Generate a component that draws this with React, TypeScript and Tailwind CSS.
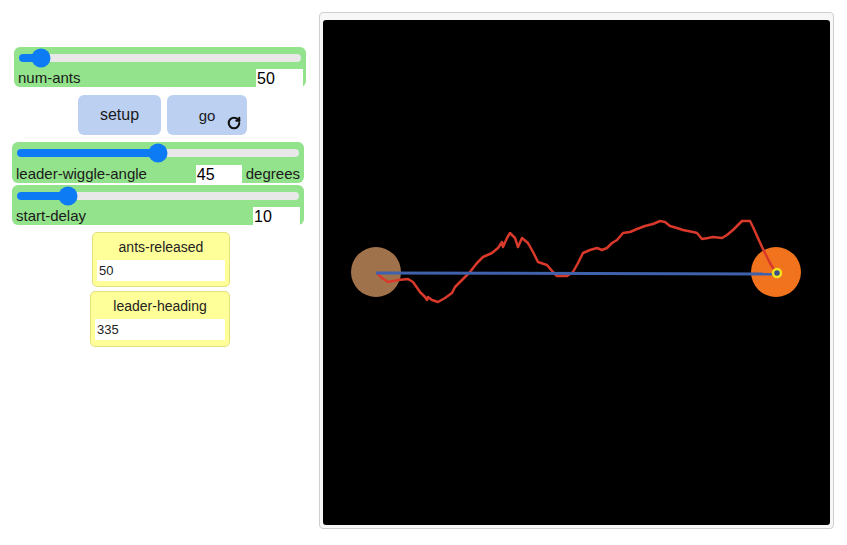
import { RotateCw } from 'lucide-react'

const font = { fontFamily: '"Liberation Sans", Arial, sans-serif' }

type SliderProps = {
  className: string
  thumb: number
  label: string
  value: string
  valueClass: string
  units?: string
}

function Slider({ className, thumb, label, value, valueClass, units }: SliderProps) {
  return (
    <div className={`flex flex-col rounded-[6px] bg-[#93e28c] ${className}`}>
      <div className="px-[5px] pt-[7px]">
        <div className="relative h-[8px] rounded-full bg-[#e8e8e8]">
          <div className="absolute inset-y-0 left-0 rounded-full bg-[#0d7cf4]" style={{ width: thumb }} />
          <div
            className="absolute top-1/2 h-[19px] w-[19px] -translate-x-1/2 -translate-y-1/2 rounded-full bg-[#0d7cf4]"
            style={{ left: thumb }}
          />
        </div>
      </div>
      <div className="mt-auto flex h-[18px] items-end">
        <span className="flex-1 pl-[4px] text-[15px] leading-[18px] text-[#1a1a1a]">{label}</span>
        <span className={`h-[18px] bg-white pl-[1px] text-[16px] leading-[19px] text-black ${valueClass}`}>{value}</span>
        {units && <span className="pr-[4px] pl-[4px] text-[15px] leading-[18px] text-[#1a1a1a]">{units}</span>}
      </div>
    </div>
  )
}

function Monitor({ className, label, value }: { className: string; label: string; value: string }) {
  return (
    <div className={`flex flex-col rounded-[5px] border border-[#e4e07c] bg-[#ffff9a] px-[4px] ${className}`}>
      <div className="pt-[5px] text-center text-[14px] leading-[18px] text-[#222]">{label}</div>
      <div className="mt-[4px] h-[21px] bg-white pl-[2px] text-[13px] leading-[21px] text-[#222]">{value}</div>
    </div>
  )
}

const trail =
  'M377 273 L382 278 L388 282 L398 280 L408 279 L413 282 L420 292 L425 297 L427 300 L428 297 L432 300 L438 302 L445 298 L452 293 L455 287 L462 280 L470 272 L477 263 L483 257 L492 253 L498 248 L502 242 L503 247 L507 238 L510 233 L515 238 L518 247 L522 238 L528 243 L533 252 L538 262 L547 265 L553 272 L557 276 L567 276 L573 272 L578 263 L583 253 L590 250 L597 248 L602 250 L607 248 L612 243 L617 240 L623 233 L630 232 L637 229 L645 226 L653 224 L660 221 L665 222 L670 226 L677 228 L683 230 L693 232 L697 233 L702 239 L708 238 L713 237 L722 238 L727 235 L733 230 L742 221 L750 221 L753 227 L762 247 L770 263 L776 273'

export default function App() {
  return (
    <div className="flex h-[545px] w-[847px] items-start bg-white" style={font}>
      <div className="flex w-[319px] shrink-0 flex-col items-start">
        <Slider className="ml-[14px] mt-[47px] h-[40px] w-[292px]" thumb={22} label="num-ants" value="50" valueClass="mr-[3px] w-[47px]" />

        <div className="ml-[78px] mt-[8px] flex gap-[6px]">
          <button className="h-[40px] w-[83px] rounded-[6px] bg-[#bcd0f2] text-[16px] text-[#1a1a1a]">setup</button>
          <button className="relative h-[40px] w-[80px] rounded-[6px] bg-[#bcd0f2] pt-[2px] text-[15px] text-[#1a1a1a]">
            go
            <RotateCw className="absolute bottom-[5px] right-[6px]" size={14} strokeWidth={3.6} color="#111" />
          </button>
        </div>

        <Slider
          className="ml-[12px] mt-[7px] h-[41px] w-[292px]"
          thumb={141}
          label="leader-wiggle-angle"
          value="45"
          valueClass="w-[46px]"
          units="degrees"
        />
        <Slider className="ml-[12px] mt-[2px] h-[40px] w-[292px]" thumb={51} label="start-delay" value="10" valueClass="mr-[4px] w-[47px]" />

        <Monitor className="ml-[92px] mt-[7px] h-[55px] w-[138px]" label="ants-released" value="50" />
        <Monitor className="ml-[90px] mt-[4px] h-[56px] w-[140px]" label="leader-heading" value="335" />
      </div>

      <div className="mt-[12px] h-[517px] w-[515px] shrink-0 rounded-[4px] border border-[#cfcfcf] bg-[#f7f7f7] pl-[3px] pt-[7px]">
        <svg width={507} height={505} viewBox="323 20 507 505" className="block">
          <rect x={323} y={20} width={507} height={505} rx={3} fill="#000" />
          <circle cx={376} cy={272} r={25} fill="#a0724b" />
          <circle cx={776} cy={272} r={25} fill="#f1731d" />
          <path d={trail} fill="none" stroke="#d9392b" strokeWidth={2.5} strokeLinejoin="round" />
          <line x1={376} y1={273} x2={776} y2={274} stroke="#4062ad" strokeWidth={3} />
          <circle cx={777} cy={273} r={4} fill="#3a4f8a" stroke="#f2e41e" strokeWidth={2.5} />
        </svg>
      </div>
    </div>
  )
}
